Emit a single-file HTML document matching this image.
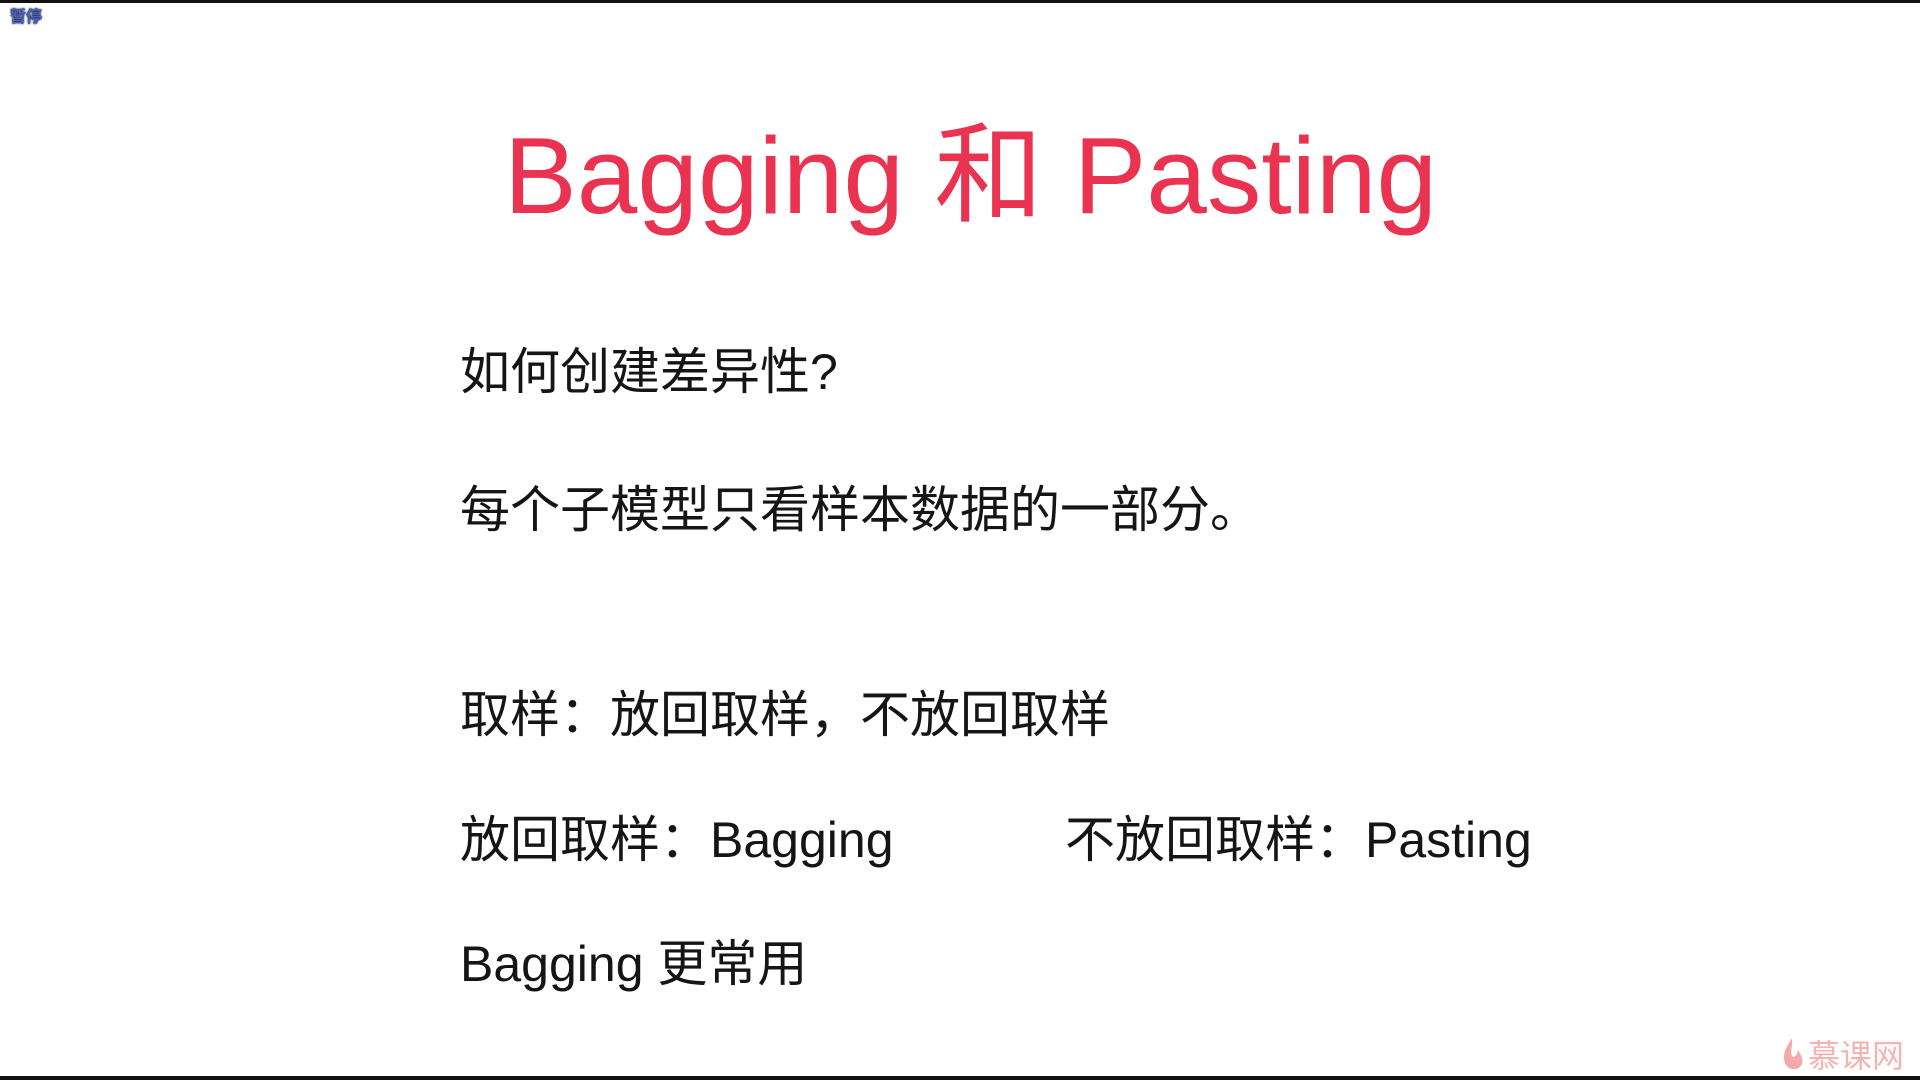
<!DOCTYPE html>
<html><head><meta charset="utf-8"><style>
html,body{margin:0;padding:0;}
body{width:1920px;height:1080px;background:#fff;position:relative;overflow:hidden;font-family:"Liberation Sans","Noto Sans CJK SC",sans-serif;}
.t{position:absolute;white-space:nowrap;line-height:1;color:#151515;font-size:50px;}
</style></head><body>
<div style="position:absolute;left:0;top:0;width:1920px;height:3px;background:#111"></div>
<div style="position:absolute;left:0;top:1076px;width:1920px;height:4px;background:#111"></div>
<div class="t" style="left:10px;top:10px;font-size:16px;font-weight:bold;color:#4a62c8;text-shadow:0 0 2px #000,0 0 1px #000;">暂停</div>
<div class="t" style="left:504px;top:122px;font-size:109px;color:#ea3350;">Bagging 和 Pasting</div>
<div class="t" style="left:460px;top:347px;">如何创建差异性?</div>
<div class="t" style="left:460px;top:485px;">每个子模型只看样本数据的一部分。</div>
<div class="t" style="left:460px;top:690px;">取样：放回取样，不放回取样</div>
<div class="t" style="left:460px;top:815px;">放回取样：Bagging</div>
<div class="t" style="left:1065px;top:815px;">不放回取样：Pasting</div>
<div class="t" style="left:460px;top:939px;">Bagging 更常用</div>
<svg style="position:absolute;left:1782px;top:1036px" width="22" height="36" viewBox="0 0 22 36"><path d="M10 2 C4 12 0 18 3 27 C6 35 17 35 20 28 C22 22 18 18 16 14 C15 20 12 22 10 20 C8 16 11 9 10 2Z" fill="#f3aaa8"/></svg>
<div class="t" style="left:1808px;top:1040px;font-size:32px;color:#f3b4b2;">慕课网</div>
</body></html>
